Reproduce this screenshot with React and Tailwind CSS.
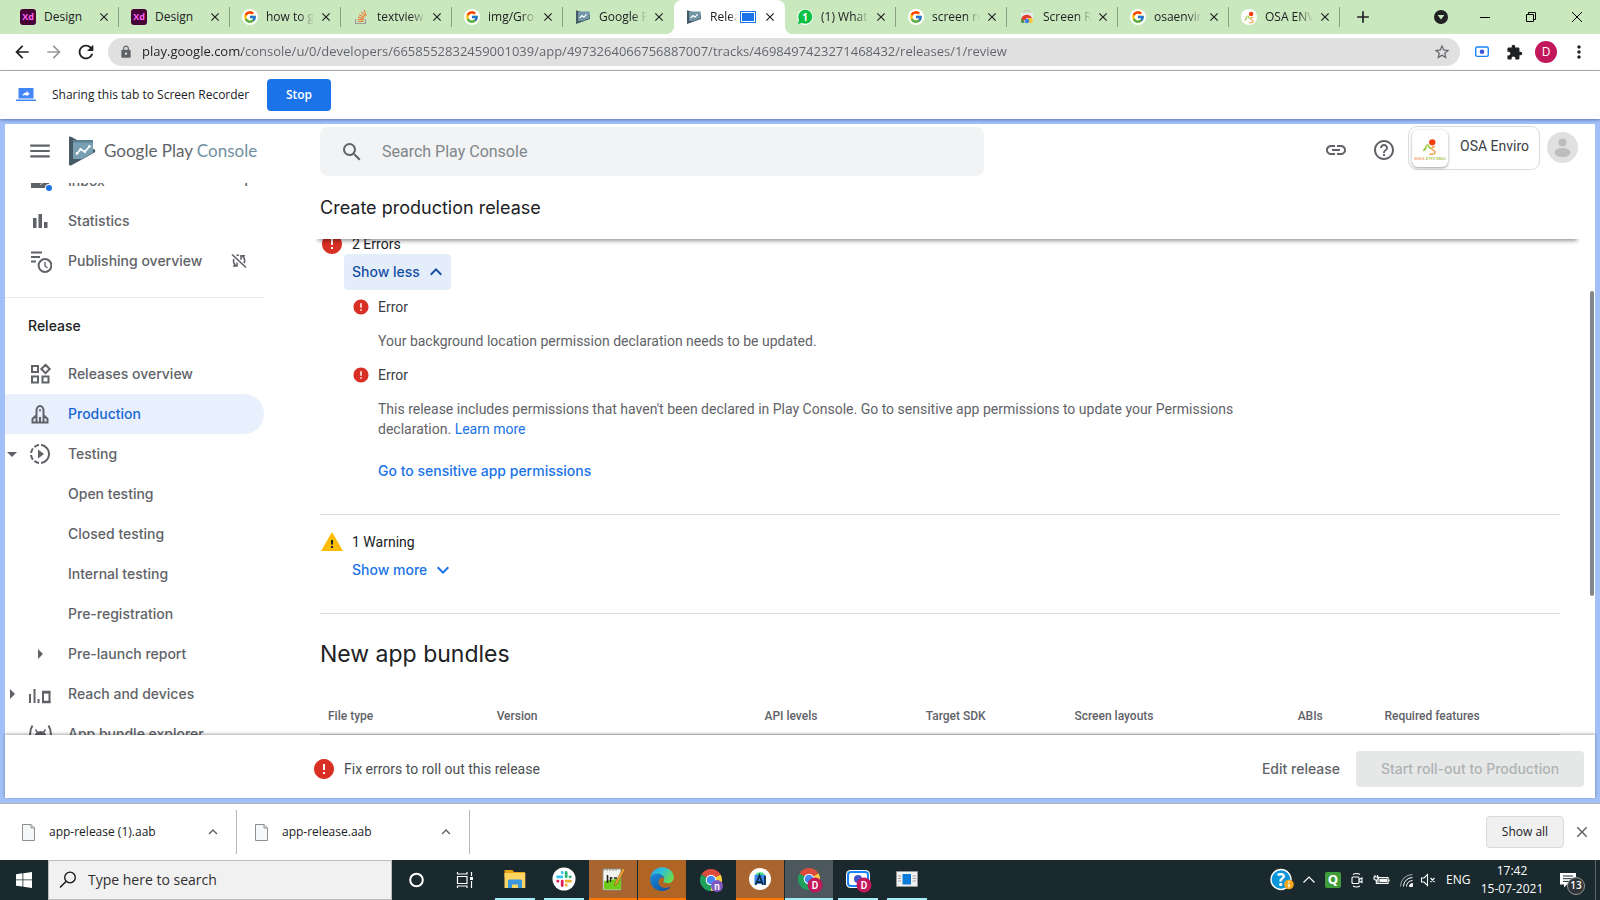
import React from "react";
import { FcGoogle } from "react-icons/fc";
import {
  MdArrowBack, MdArrowForward, MdRefresh, MdLock, MdStarBorder, MdExtension, MdMoreVert, MdClose, MdAdd,
  MdMenu, MdSearch, MdLink, MdHelpOutline, MdError, MdExpandLess, MdExpandMore,
  MdOutlineSlowMotionVideo, MdArrowDropDown, MdArrowRight,
} from "react-icons/md";

/* ---------- favicons ---------- */

const XdIcon = () => (
  <svg viewBox="0 0 16 16" className="size-4">
    <rect width="16" height="16" rx="3" fill="#470137" />
    <text x="8" y="11.4" textAnchor="middle" fontSize="9" fontWeight="700" fontFamily="Open Sans, sans-serif" fill="#ff61f6">Xd</text>
  </svg>
);

const GoogleIcon = () => (
  <span className="flex size-4 items-center justify-center rounded-full bg-white">
    <FcGoogle className="size-[14px]" />
  </span>
);

const StackIcon = () => (
  <svg viewBox="0 0 16 16" className="size-4" fill="none">
    <path d="M2.5 10v4.5h10V10" stroke="#9aa0a0" strokeWidth="1.2" />
    <path d="M4.5 12.5h6M4.6 10.3l6 .6M5 8l5.8 1.6M6.2 5.4l5.2 3M8.4 2.8l4 4.6M11.2 1l2 5.6" stroke="#e8803a" strokeWidth="1.2" />
  </svg>
);

const PlayConsoleMark = ({ className }) => (
  <svg viewBox="0 0 28 30" className={className}>
    <path d="M1 1.6Q1-.3 3 .8L26.5 13.6Q28 14.8 26.5 16.4L3 29.4Q1 30 1 28.4Z" fill="#455a64" />
    <path d="M5 4h20v12.800L13.500 23H5z" fill="#78a0b2" />
    <path d="M5 4h20v2.6H5z" fill="#5b8394" />
    <path d="m9 17.4 3.6-4.2 4.2 2.6 4.6-5.4" fill="none" stroke="#fff" strokeWidth="1.6" />
    <g fill="#fff"><circle cx="9" cy="17.4" r="1.3" /><circle cx="12.6" cy="13.2" r="1.3" /><circle cx="16.8" cy="15.8" r="1.3" /><circle cx="21.4" cy="10.4" r="1.3" /></g>
  </svg>
);

const SmallConsole = () => (
  <svg viewBox="0 0 16 16" className="size-4">
    <path d="M1 1.2 15 5.4V10L1 15Z" fill="#455a64" />
    <path d="M3 2.6h11.6v6.6L7 12H3z" fill="#6f95a6" />
    <path d="m4.6 9 2.4-2.4L9 8.2l2.6-3" fill="none" stroke="#fff" strokeWidth="1.1" />
  </svg>
);

const WhatsIcon = () => (
  <svg viewBox="0 0 16 16" className="size-4">
    <circle cx="8" cy="8" r="8" fill="#fff" />
    <path d="M1 15 2 11a7 7 0 1 1 3 3Z" fill="#0cc143" />
    <text x="8.2" y="11.6" textAnchor="middle" fontSize="10" fontWeight="700" fontFamily="Open Sans, sans-serif" fill="#fff">1</text>
  </svg>
);

const StoreIcon = () => (
  <svg viewBox="0 0 16 16" className="size-4">
    <path d="M5 4V2.6A1 1 0 0 1 6 1.6h4a1 1 0 0 1 1 1V4" fill="none" stroke="#bbb" strokeWidth="1" />
    <path d="M2 4h12v9a1 1 0 0 1-1 1H3a1 1 0 0 1-1-1Z" fill="#e9e9e9" />
    <path d="M2.6 14A5.6 5.6 0 0 1 13 9L8 9Z" fill="#e33b2e" />
    <path d="M2.4 13.6A5.6 5.6 0 0 1 2.8 9.6L6 14H3Z" fill="#3ba55b" />
    <path d="M13 9a5.6 5.6 0 0 1 .8 4L13 14h-3L9 9Z" fill="#f9c835" />
    <circle cx="8" cy="12" r="2.3" fill="#3f7fe8" />
  </svg>
);

const OsaMark = ({ className }) => (
  <svg viewBox="0 0 16 16" className={className}>
    <circle cx="10" cy="3.8" r="2.8" fill="#f43e0a" />
    <path d="M1.8 12C1.6 9.8 3 9.6 3.6 8.2 4 7 4.2 6 5 5.6c.2 1.6.2 3-.2 4-.6 1.4-1.600 2-3 2.4Z" fill="#9ccb3b" />
    <path d="M6 5.6c.6 2.4 1.6 3.4 3.4 3.8" fill="none" stroke="#9ccb3b" strokeWidth="1.4" />
    <path d="M12.6 7.6c-2 .2-3.2 1-3 2 .2 1.2 3.2 1.4 3 3.2-.2 1.6-3.2 2-5.2 1.4" fill="none" stroke="#f6a24a" strokeWidth="1.3" />
  </svg>
);

const OsaIcon = () => (
  <span className="flex size-4 items-center justify-center rounded-full bg-white"><OsaMark className="size-[13px]" /></span>
);

const TABS = [
  { icon: XdIcon, text: "Design" },
  { icon: XdIcon, text: "Design" },
  { icon: GoogleIcon, text: "how to g" },
  { icon: StackIcon, text: "textview" },
  { icon: GoogleIcon, text: "img/Grou" },
  { icon: SmallConsole, text: "Google P", noLine: true },
  { icon: SmallConsole, text: "Relea", active: true },
  { icon: WhatsIcon, text: "(1) Whats" },
  { icon: GoogleIcon, text: "screen re" },
  { icon: StoreIcon, text: "Screen R" },
  { icon: GoogleIcon, text: "osaenviro" },
  { icon: OsaIcon, text: "OSA ENV" },
];

function Tab({ icon: Icon, text, active, noLine }) {
  const fade = text === "Design" ? "" : "[mask-image:linear-gradient(90deg,#000_70%,transparent)]";
  return (
    <div className={`relative flex h-full w-[111px] items-center pl-3 ${active ? "rounded-t-lg bg-white" : ""}`}>
      {active && (
        <>
          <span className="absolute bottom-0 -left-2 size-2 bg-[radial-gradient(circle_at_0_0,transparent_8px,#fff_8px)]" />
          <span className="absolute -right-2 bottom-0 size-2 bg-[radial-gradient(circle_at_100%_0,transparent_8px,#fff_8px)]" />
        </>
      )}
      <button className="flex items-center gap-2">
        <Icon />
        <span className={`block overflow-hidden text-left whitespace-nowrap ${active ? "w-7" : "w-12"} ${fade}`}>{text}</span>
        {active && <span className="-ml-[6px] block h-3 w-4 border border-[#1a73e8] bg-[#1a73e8] shadow-[inset_0_0_0_1px_#fff]" />}
      </button>
      <button aria-label="Close tab" className="absolute right-[7px] flex size-4 items-center justify-center text-[#202124]">
        <MdClose className="size-[14px]" />
      </button>
      {!active && !noLine && <span className="absolute right-0 h-5 w-px bg-[#8a9c83]" />}
    </div>
  );
}

function TabStrip() {
  return (
    <div className="flex h-[34px] items-center bg-[#cae8be] pl-2 text-xs text-[#202124]">
      {TABS.map((t, i) => <Tab key={i} {...t} />)}
      <button aria-label="New tab" className="ml-[13px] flex size-5 items-center justify-center"><MdAdd className="size-5" /></button>
      <div className="ml-auto flex h-full items-center text-black">
        <button aria-label="Search tabs" className="mr-[13px] flex size-4 items-center justify-center">
          <svg viewBox="0 0 16 16" className="size-4"><circle cx="8" cy="8" r="7" fill="#202124" /><path d="M4.6 6h6.8L8 10.6Z" fill="#cae8be" /></svg>
        </button>
        <button aria-label="Minimise" className="flex h-7 w-[46px] items-center justify-center"><svg viewBox="0 0 10 10" className="size-[10px]"><path d="M0 5.5h10" stroke="#000" /></svg></button>
        <button aria-label="Restore" className="flex h-7 w-[46px] items-center justify-center"><svg viewBox="0 0 10 10" className="size-[10px]" fill="none" stroke="#000"><path d="M.5 2.5h7v7h-7zM2.5 2.5v-2h7v7h-2" /></svg></button>
        <button aria-label="Close window" className="flex h-7 w-[46px] items-center justify-center"><svg viewBox="0 0 10 10" className="size-[10px]"><path d="M0 0 10 10M10 0 0 10" stroke="#000" /></svg></button>
      </div>
    </div>
  );
}

function Toolbar() {
  return (
    <div className="flex h-[37px] items-center border-b border-[#b6b4b6] bg-white pr-[11px] pl-3 text-[#202124]">
      <button aria-label="Back" className="flex w-5 justify-center"><MdArrowBack className="size-5" /></button>
      <button aria-label="Forward" className="ml-3 flex w-5 justify-center text-[#9a9a9a]"><MdArrowForward className="size-5" /></button>
      <button aria-label="Reload" className="ml-3 flex w-5 justify-center"><MdRefresh className="size-[22px] shrink-0" /></button>
      <div className="ml-3 flex h-7 flex-1 items-center rounded-full bg-[#e0e0e0] pr-[9px] pl-[11px]">
        <MdLock className="size-[14px] text-[#5f6368]" />
        <input
          aria-label="Address"
          readOnly
          value="play.google.com/console/u/0/developers/6658552832459001039/app/4973264066756887007/tracks/4698497423271468432/releases/1/review"
          className="ml-[9px] flex-1 bg-[linear-gradient(90deg,#202124_100px,#5f6368_100px)] bg-clip-text text-[13px] text-transparent outline-none"
        />
        <button aria-label="Bookmark"><MdStarBorder className="size-[18px] text-[#5f6368]" /></button>
      </div>
      <button aria-label="Screen recorder" className="ml-[14px]">
        <svg viewBox="0 0 16 16" className="size-4"><rect x="1.7" y="3" width="12.6" height="9.4" rx="1.6" fill="#fff" stroke="#1a82f7" strokeWidth="1.4" /><circle cx="8" cy="7.8" r="2.3" fill="#3f51d8" /></svg>
      </button>
      <button aria-label="Extensions" className="ml-4"><MdExtension className="size-[17px]" /></button>
      <button aria-label="Profile D" className="ml-3 flex size-[22px] items-center justify-center rounded-full bg-[#c2185b] text-xs text-white">D</button>
      <button aria-label="Menu" className="ml-3"><MdMoreVert className="size-5" /></button>
    </div>
  );
}

function InfoBar() {
  return (
    <div className="relative z-10 flex h-12 items-center bg-white pl-4 text-xs text-[#202124] shadow-[0_1px_3px_rgba(40,70,140,0.6)]">
      <svg viewBox="0 0 20 16" className="h-4 w-5">
        <path d="M2.5 1h15v10.500h-15z" fill="#4285f4" /><path d="M0 12.5h20V14H0z" fill="#4285f4" />
        <path d="M6.5 9c.4-2 1.6-3.2 4-3.4V4l3.2 2.8-3.2 2.7V8c-1.7 0-2.9.2-4 1Z" fill="#fff" />
      </svg>
      <span className="ml-4 w-[203px]">Sharing this tab to Screen Recorder</span>
      <button className="ml-3 h-8 w-16 rounded-[4px] bg-[#1a73e8] font-semibold text-white">Stop</button>
    </div>
  );
}

/* ---------- console ---------- */

const ic = "size-6 shrink-0";
const StatIcon = () => <svg viewBox="0 0 24 24" className={ic} fill="#5f6368"><path d="M5 9h3.500v10H5zM10.500 5H14v14h-3.500zM16 13h3.500v6H16z" /></svg>;
const PubIcon = () => (
  <svg viewBox="0 0 24 24" className={ic} fill="none" stroke="#5f6368" strokeWidth="2">
    <path d="M3 3.500h11M3 8h9M3 12.500h5" /><circle cx="17" cy="16.500" r="6.400" /><path d="M17 13v4l2.500 1.800" strokeWidth="1.4" />
  </svg>
);
const RelIcon = () => (
  <svg viewBox="0 0 24 24" className={ic} fill="none" stroke="#5f6368" strokeWidth="2">
    <path d="M4 4h6v6H4zM4 14.500h6v6H4zM14.500 14.500h6v6h-6zM17.500 2.800 21.700 7 17.500 11.200 13.300 7Z" />
  </svg>
);
const ProdIcon = () => (
  <svg viewBox="0 0 24 24" className={ic} fill="none" stroke="#5f6368" strokeWidth="2">
    <path d="M8.500 20V8.500C8.500 6 10 4 12 4s3.500 2 3.500 4.500V20M8.500 13l-4 4v3.500h15V17l-4-4M12 15v5" /><path d="M12 7v2.500" strokeWidth="1.6" />
  </svg>
);
const ReachIcon = () => (
  <svg viewBox="0 0 24 24" className={ic} fill="none" stroke="#5f6368" strokeWidth="2">
    <path d="M2 12v9M6.500 7v14M10.500 17v4M15 10.500h6.500V20H15z" /><path d="M14 20h8.500M14 10h8.500" strokeWidth="2.600" />
  </svg>
);
const BundleIcon = () => (
  <svg viewBox="0 0 24 24" className={ic} fill="none" stroke="#5f6368" strokeWidth="2">
    <path d="M4.500 3.500C1.300 8.500 1.300 15.500 4.500 20.500M20.500 3.500c3.200 5 3.200 12 0 17" /><path d="M6.500 15a6 6 0 0 1 12 0Z" fill="#5f6368" stroke="none" /><path d="m7.500 7.500 2 3M17.500 7.500l-2 3" strokeWidth="1.4" />
  </svg>
);
const InboxIcon = () => (
  <svg viewBox="0 0 24 24" className={ic}>
    <path d="M3 4h18v11.500l-4 1.500-3-3-4 3-5-3z" fill="#5f6368" /><path d="M3 14h5.500l3.500 2 3.500-2H21v5H3z" fill="#5f6368" />
    <circle cx="21" cy="19" r="4" fill="#fff" /><circle cx="21" cy="19" r="3" fill="#1a73e8" />
  </svg>
);
const SyncOff = () => (
  <svg viewBox="0 0 16 16" className="size-4" fill="none" stroke="#5f6368" strokeWidth="1.6">
    <path d="M1 1.5 15 14.5M5.500 2.500 8 2M2.800 6c-.8 3 0 5 1.8 6.6M2 13h4V9.500M14 2.800h-4v4M11.500 3.200c2 1.8 2.600 4.600 1.6 7" />
  </svg>
);
const WarningIcon = ({ className }) => (
  <svg viewBox="0 0 24 24" className={className}>
    <path d="M1 21h22L12 2 1 21z" fill="#fbbc04" /><path d="M11 10h2v4.500h-2zM11 16h2v2h-2z" fill="#202124" />
  </svg>
);

function NavItem({ icon: Icon, label, active, arrow, innerArrow, end }) {
  return (
    <a href="#" className={`flex h-10 shrink-0 items-center ${active ? "rounded-r-full bg-[#e8f0fe] text-[#1967d2]" : ""}`}>
      <span className="flex w-[23px] shrink-0 items-center">
        {arrow === "down" && <MdArrowDropDown className="-ml-[5px] size-6 shrink-0" />}
        {arrow === "right" && <MdArrowRight className="-ml-[5px] size-6 shrink-0" />}
      </span>
      <span className="flex w-10 shrink-0">
        {Icon && <Icon />}
        {innerArrow && <MdArrowRight className="size-6" />}
      </span>
      <span className="flex-1">{label}</span>
      {end}
    </a>
  );
}

const SlowIcon = () => <MdOutlineSlowMotionVideo className={ic} />;

function SideNav() {
  return (
    <nav className="w-[259px] shrink-0 overflow-hidden text-sm font-medium text-[#5f6368]">
      <div className="-mt-[22px] flex flex-col">
        <NavItem icon={InboxIcon} label="Inbox" end={<span className="mr-4">1</span>} />
        <NavItem icon={StatIcon} label="Statistics" />
        <NavItem icon={PubIcon} label="Publishing overview" end={<span className="mr-[17px]"><SyncOff /></span>} />
        <div className="mt-4 border-t border-[#e8eaed]" />
        <h2 className="my-[18px] pl-[23px] leading-5 text-[#202124]">Release</h2>
        <NavItem icon={RelIcon} label="Releases overview" />
        <NavItem icon={ProdIcon} label="Production" active />
        <NavItem icon={SlowIcon} label="Testing" arrow="down" />
        <NavItem label="Open testing" />
        <NavItem label="Closed testing" />
        <NavItem label="Internal testing" />
        <NavItem label="Pre-registration" />
        <NavItem label="Pre-launch report" innerArrow />
        <NavItem icon={ReachIcon} label="Reach and devices" arrow="right" />
        <NavItem icon={BundleIcon} label="App bundle explorer" />
      </div>
    </nav>
  );
}

function ConsoleHeader() {
  return (
    <header className="flex h-[59px] items-start text-[#5f6368]">
      <div className="flex w-[315px] shrink-0 items-center pt-3">
        <button aria-label="Main menu" className="ml-[22px]"><MdMenu className="size-[26px]" /></button>
        <PlayConsoleMark className="ml-[15px] h-[30px] w-7" />
        <a href="#" className="ml-2 font-[Lato] text-[17px] text-[#5f6368]">Google Play <span className="text-[#6f8f9f]">Console</span></a>
      </div>
      <label className="mt-[3px] flex h-[49px] max-w-[664px] flex-1 items-center rounded-lg bg-[#f1f3f4] pl-5">
        <MdSearch className="size-6" />
        <input aria-label="Search Play Console" placeholder="Search Play Console" className="ml-[18px] flex-1 font-[Roboto] text-base outline-none placeholder:text-[#80868b]" />
      </label>
      <div className="ml-auto flex items-start pr-[17px]">
        <button aria-label="Copy link" className="mt-[14px]"><MdLink className="size-6" /></button>
        <button aria-label="Help" className="mt-[14px] ml-6"><MdHelpOutline className="size-6" /></button>
        <button className="mt-[2px] ml-3 flex h-11 w-[132px] rounded-[9px] border border-[#dadce0] font-[Roboto] text-sm text-[#3c4043]">
          <span className="mt-[3px] ml-[3px] flex h-[37px] w-9 flex-col items-center rounded-md bg-white pt-2 shadow-[0_1px_3px_rgba(60,64,67,0.5)]">
            <OsaMark className="size-[18px]" />
            <span className="font-['Liberation_Serif'] text-[5px] leading-[6px] font-bold text-[#a9c34c]"><span className="text-[#f08a4a]">OSA</span> ENVIRO</span>
          </span>
          <span className="mt-[9px] ml-3 leading-5">OSA Enviro</span>
        </button>
        <button aria-label="Account" className="mt-2 ml-[7px]">
          <svg viewBox="0 0 31 31" className="size-[31px]"><circle cx="15.5" cy="15.5" r="15.5" fill="#e0e0e0" /><circle cx="15.5" cy="10.5" r="4" fill="#bdbdbd" /><ellipse cx="15.5" cy="20.5" rx="8" ry="4.5" fill="#bdbdbd" /></svg>
        </button>
      </div>
    </header>
  );
}

function ErrorItem({ children }) {
  return (
    <li>
      <div className="mb-[14px] flex h-5 items-center text-[#3c4043]">
        <MdError className="mr-2 size-[18px] text-[#d93025]" />
        Error
      </div>
      <div className="mb-[14px] max-w-[916px] pl-[26px] text-[#5f6368]">{children}</div>
    </li>
  );
}

function ReleaseReview() {
  return (
    <main className="relative ml-[50px] flex min-w-0 flex-1 flex-col overflow-hidden">
      <div className="z-10 mr-[14px] h-14 shrink-0 bg-white pl-[6px] shadow-[0_6px_4px_-4px_rgba(0,0,0,0.4)]">
        <h1 className="pt-3 text-lg leading-[26px] text-[#202124]">Create production release</h1>
      </div>
      <div className="mr-[35px] ml-[6px] min-h-0 flex-1 font-[Roboto] text-sm leading-5">
        <section className="-mt-[5px] border-b border-[#dadce0] pb-[33px]">
          <div className="flex h-5 items-center text-[#202124]"><MdError className="mr-2 size-6 text-[#d93025]" />2 Errors</div>
          <button className="ml-6 flex h-9 w-[107px] items-center rounded-[4px] bg-[#e3eefa] pl-2 font-[Inter] font-medium text-[#174ea6]">
            Show less<MdExpandLess className="ml-1 size-6" />
          </button>
          <ul className="mt-[7px] ml-8">
            <ErrorItem>Your background location permission declaration needs to be updated.</ErrorItem>
            <ErrorItem>
              This release includes permissions that haven't been declared in Play Console. Go to sensitive app permissions to update your Permissions declaration. <a href="#" className="text-[#1a73e8]">Learn more</a>
            </ErrorItem>
          </ul>
          <a href="#" className="mt-[22px] ml-[58px] block font-[Inter] font-medium text-[#1a73e8]">Go to sensitive app permissions</a>
        </section>
        <section className="border-b border-[#dadce0] pt-[17px] pb-[25px]">
          <div className="flex h-5 items-center text-[#202124]"><WarningIcon className="mr-2 size-6" />1 Warning</div>
          <button className="ml-6 flex h-9 w-[115px] items-center pl-2 font-[Inter] font-medium text-[#1a73e8]">
            Show more<MdExpandMore className="ml-1 size-6" />
          </button>
        </section>
        <h2 className="mt-6 font-[Inter] text-[23px] leading-8 text-[#202124]">New app bundles</h2>
        <table className="mt-7 w-full table-fixed text-xs text-[#5f6368]">
          <thead>
            <tr className="h-9 border-b border-[#dadce0] text-left [&>th]:pl-2 [&>th]:font-medium">
              <th className="w-[13.6%]">File type</th>
              <th className="w-[21.6%]">Version</th>
              <th className="w-[13%]">API levels</th>
              <th className="w-[12%]">Target SDK</th>
              <th className="w-[18%]">Screen layouts</th>
              <th className="w-[7%]">ABIs</th>
              <th>Required features</th>
            </tr>
          </thead>
        </table>
      </div>
      <span className="absolute top-[108px] right-px h-[305px] w-1 rounded-full bg-[#80868b]" />
    </main>
  );
}

function Console() {
  return (
    <div className="flex min-h-0 flex-1 flex-col border-[5px] border-[#a1c0f8] bg-white font-[Inter]">
      <ConsoleHeader />
      <div className="flex min-h-0 flex-1">
        <SideNav />
        <ReleaseReview />
      </div>
      <footer className="z-10 flex h-[63px] shrink-0 items-center bg-white pt-1 pr-[11px] pl-[307px] font-[Roboto] text-sm text-[#5f6368] shadow-[0_-1px_3px_rgba(0,0,0,0.35)]">
        <MdError className="mr-2 size-6 text-[#d93025]" />
        <span className="text-[#4a4e52]">Fix errors to roll out this release</span>
        <button className="mr-4 ml-auto font-[Inter] font-medium">Edit release</button>
        <button disabled className="h-9 w-[228px] rounded-[4px] bg-[#e6e8e8] font-[Inter] font-medium text-[#afb2b3]">Start roll-out to Production</button>
      </footer>
    </div>
  );
}

/* ---------- downloads and taskbar ---------- */

function Download({ name }) {
  return (
    <div className="flex h-11 w-[233px] items-center border-r border-[#b9b9b9] pr-[14px] pl-[18px]">
      <svg viewBox="0 0 13 17" className="h-[17px] w-[13px]"><path d="M.5.5h8.500l3.500 3.500v12.500H.5Z" fill="#f5f8f9" stroke="#8f8f8f" /><path d="M9 .5v3.500h3.500" fill="none" stroke="#8f8f8f" /></svg>
      <span className="ml-[14px] flex-1">{name}</span>
      <button aria-label={`Options for ${name}`}><MdExpandLess className="size-[18px] text-[#5f6368]" /></button>
    </div>
  );
}

function Shelf() {
  return (
    <div className="flex h-[57px] shrink-0 items-center border-t border-[#b4b4b4] bg-white pl-1 text-xs text-[#202124]">
      <Download name="app-release (1).aab" />
      <Download name="app-release.aab" />
      <button className="ml-auto h-8 w-[78px] rounded-[4px] border border-[#d9d9d9] bg-[#f0f0f0]">Show all</button>
      <button aria-label="Close downloads" className="mx-[9px]"><MdClose className="size-[18px] text-[#5f6368]" /></button>
    </div>
  );
}

const ChromeLogo = ({ badge, color }) => (
  <svg viewBox="0 0 24 24" className="size-6 overflow-visible">
    <path d="M12 12 2.47 6.5A11 11 0 0 1 21.53 6.5Z" fill="#dd4b3e" />
    <path d="M12 12V23A11 11 0 0 1 2.47 6.5Z" fill="#1fa15d" />
    <path d="M12 12 21.53 6.5A11 11 0 0 1 12 23Z" fill="#ffcd42" />
    <circle cx="12" cy="12" r="5.3" fill="#fff" /><circle cx="12" cy="12" r="4.3" fill="#4587f4" />
    <circle cx="18" cy="18" r={badge === "D" ? 7.5 : 6} fill={color} />
    <text x="18" y="21.5" textAnchor="middle" fontSize="10" fontWeight="600" fontFamily="Roboto, sans-serif" fill="#fff">{badge}</text>
  </svg>
);

const SlackLogo = () => (
  <svg viewBox="0 0 24 24" className="size-6" fill="none" strokeWidth="2.8" strokeLinecap="round">
    <circle cx="12" cy="12" r="11.5" fill="#fff" />
    <path d="M10.200 5.500v.3M5.500 9.800h4.500" stroke="#36c5f0" /><path d="M14.200 5.500v4.300M18.300 9.800h-.3" stroke="#2eb67d" />
    <path d="M14.200 14.200h4.300M14.200 18.300v-.3" stroke="#ecb22e" /><path d="M10.200 14.200v4.300M5.700 14.200h.3" stroke="#e01e5a" />
  </svg>
);

const EditorLogo = () => (
  <svg viewBox="0 0 24 24" className="size-6">
    <path d="M2 2h18v21H2z" fill="#f4f4ee" stroke="#8d8d80" strokeWidth=".8" /><path d="M3 14l17-3v11.500H3z" fill="#6ecb1c" /><path d="M3 1v3M6 1v3M9 1v3M12 1v3M15 1v3" stroke="#777" strokeWidth=".8" />
    <path d="M6.500 8v8" stroke="#222" strokeWidth="1.600" /><path d="M9.500 10v5M9 11h2.500M13 11h3" stroke="#222" strokeWidth="1.400" /><path d="m22 1-8 15-.5 3 2.500-2L24 2.500Z" fill="#f2a53a" stroke="#8b5a1a" strokeWidth=".6" />
  </svg>
);

const EdgeLogo = () => (
  <svg viewBox="0 0 24 24" className="size-6">
    <defs>
      <linearGradient id="edgeTop" x1="0" x2="1" y1="0" y2=".5"><stop offset="0" stopColor="#2aa5e0" /><stop offset=".5" stopColor="#2fc0d6" /><stop offset="1" stopColor="#66dd55" /></linearGradient>
      <linearGradient id="edgeLow" x1="0" x2="1" y1="0" y2="1"><stop offset="0" stopColor="#1b8ad8" /><stop offset="1" stopColor="#0c4f9e" /></linearGradient>
    </defs>
    <path d="M.4 10.500C1 4.500 6 .2 12 .2c7 0 11.8 4.800 11.800 10 0 4-3 6-6 6-3.200 0-4.800-1.200-4.300-2 1-1.200 1.200-2.400.2-4.200C11.500 6.500 4 6 .4 10.500Z" fill="url(#edgeTop)" />
    <path d="M.2 12.500C0 8 4.500 6.800 7.500 6.800c3.500 0 6 2 6.500 4.200-2.500-1.500-5.500.5-5.500 4 0 4.500 5 8 12.500 4.500-2 3-5.500 4.400-9 4.400C5.500 23.900.3 19 .2 12.500Z" fill="url(#edgeLow)" />
  </svg>
);

const StudioLogo = () => (
  <svg viewBox="0 0 24 24" className="size-6">
    <circle cx="12" cy="12" r="11" fill="#fff" /><path d="M7 8a5.500 4.500 0 0 1 10 0Z" fill="#3ddc84" /><path d="M6.500 8h11v9h-11z" fill="#4285f4" />
    <path d="m7.500 18 4-9.500L15 18M9 15h5M17 9v9" fill="none" stroke="#083042" strokeWidth="1.8" />
  </svg>
);

const RecorderLogo = () => (
  <svg viewBox="0 0 24 24" className="size-6 overflow-visible">
    <rect x="0" y="3" width="24" height="18" rx="4.500" fill="#fff" /><rect x="2" y="5" width="20" height="14" rx="3" fill="#fff" stroke="#1a82f7" strokeWidth="2" /><circle cx="12" cy="12" r="4" fill="#4652c8" />
    <circle cx="18" cy="18" r="7.5" fill="#c2185b" /><text x="18" y="21.5" textAnchor="middle" fontSize="10" fontWeight="600" fontFamily="Roboto, sans-serif" fill="#fff">D</text>
  </svg>
);

const WindowLogo = () => (
  <svg viewBox="0 0 24 24" className="size-6">
    <path d="M1.500 4.500h21v15h-21z" fill="#f1f1f1" stroke="#999" strokeWidth=".7" /><path d="M7.500 7h8.500v10.500H7.500z" fill="#0a7bd8" /><path d="M3 9h3M3 11.500h3M3 14h3M17.500 9h3.500M17.500 11.500h3.500M17.500 14h3.500" stroke="#999" strokeWidth=".9" />
  </svg>
);

const FolderLogo = () => (
  <svg viewBox="0 0 24 24" className="size-6">
    <path d="M1.500 3h8l1.500 2h11v5h-20.500z" fill="#e8a317" /><path d="M1.500 6h20.800v15H1.500z" fill="#fcd462" /><path d="M5 21v-7q0-1.500 1.500-1.500h11Q19 12.500 19 14v7h-4v-3.500H9V21Z" fill="#3a96dd" />
  </svg>
);

const Cortana = () => <svg viewBox="0 0 24 24" className="size-6"><circle cx="11.500" cy="12" r="6.300" fill="none" stroke="#fff" strokeWidth="2" /></svg>;
const TaskView = () => (
  <svg viewBox="0 0 24 24" className="size-6" fill="none" stroke="#fff" strokeWidth="1.2"><path d="M3.500 8.500H13v7H3.500zM3.500 4v2H13V4M3.500 20v-2H13v2M17.500 4v4M17.500 13v7" /><path d="M16 9h3v3h-3z" fill="#fff" stroke="none" /></svg>
);

const APPS = [
  { label: "Cortana", icon: <Cortana /> },
  { label: "Task view", icon: <TaskView /> },
  { label: "File Explorer", icon: <FolderLogo />, line: true },
  { label: "Slack", icon: <SlackLogo />, line: true },
  { label: "Notepad++", icon: <EditorLogo />, tile: "border-b-2 border-[#ff7600] bg-[#a8652f]" },
  { label: "Edge", icon: <EdgeLogo />, tile: "border-b-2 border-[#ff7600] bg-[#b06524]" },
  { label: "Chrome", icon: <ChromeLogo badge="n" color="#7e57c2" /> },
  { label: "Android Studio", icon: <StudioLogo />, tile: "border-b-2 border-[#ff7600] bg-[#a8652f]" },
  { label: "Chrome D", icon: <ChromeLogo badge="D" color="#c2185b" />, tile: "border-b-2 border-[#a6ecfa] bg-[#4c585d]" },
  { label: "Screen Recorder", icon: <RecorderLogo />, line: true },
  { label: "Window", icon: <WindowLogo />, line: true },
];

function Taskbar() {
  return (
    <div className="flex h-10 shrink-0 items-stretch bg-[#1a292d] text-xs text-white">
      <button aria-label="Start" className="flex w-12 items-center justify-center">
        <svg viewBox="0 0 16 16" className="size-4" fill="#fff"><path d="M0 2.200 6.500 1.300v6.200H0zM7.300 1.200 16 0v7.500H7.300zM0 8.300h6.500v6.300L0 13.700zM7.300 8.300H16V16l-8.700-1.200z" /></svg>
      </button>
      <label className="flex w-[344px] items-center border border-[#bdbdbd] bg-[#f1f1f1] pl-[10px]">
        <svg viewBox="0 0 18 18" className="size-[18px]" fill="none" stroke="#111" strokeWidth="1.3"><circle cx="11" cy="6.500" r="5.300" /><path d="M7.200 10.300 1 16.500" /></svg>
        <input aria-label="Type here to search" placeholder="Type here to search" className="ml-[11px] flex-1 text-sm outline-none placeholder:text-[#2f2f2f]" />
      </label>
      <div className="ml-px flex gap-px">
        {APPS.map((a) => (
          <button key={a.label} aria-label={a.label} className={`flex w-12 flex-col items-center ${a.tile || ""}`}>
            <span className="flex min-h-0 flex-1 items-center">{a.icon}</span>
            {a.line && <span className="h-0.5 w-10 bg-[#a6ecfa]" />}
          </button>
        ))}
      </div>
      <div className="ml-auto flex items-center">
        <svg viewBox="0 0 24 24" className="size-6"><circle cx="11" cy="11.500" r="10" fill="#0c95da" stroke="#fff" strokeWidth="1.4" /><text x="11" y="17.5" textAnchor="middle" fontSize="17" fontWeight="700" fontFamily="Open Sans, sans-serif" fill="#fff">?</text><circle cx="19" cy="16.500" r="4.800" fill="#f5a81c" /><path d="M19 15.700v3.500M19 13.300v1.300" stroke="#fff" strokeWidth="1.4" /></svg>
        <button aria-label="Hidden icons" className="ml-2"><svg viewBox="0 0 14 14" className="size-[14px]" fill="none" stroke="#fff" strokeWidth="1.2"><path d="m1.500 9.500 5.500-5.500 5.500 5.500" /></svg></button>
        <span className="ml-[9px] flex size-4 items-center justify-center rounded-[2px] bg-[#3f9c3b] text-[13px] font-bold">Q</span>
        <svg viewBox="0 0 16 16" className="ml-2 size-4" fill="none" stroke="#fff" strokeWidth="1.1"><rect x="3" y="5" width="7" height="6.500" rx="1" /><path d="m10 7.500 3-1.500v4.500L10 9M4 2.500q3.500-2 7 0M4 14q3.500 2 7 0" /></svg>
        <svg viewBox="0 0 17 16" className="ml-2 h-4 w-[17px]" fill="none" stroke="#fff" strokeWidth="1.1"><path d="M5 5.500h10v6H5zM16 7.500v2M2 3v2M4.500 3v2M1 5h4.500v2L3.300 8.500 1 7ZM3.300 8.500v3H5" /><path d="M7 7.200h6.500v2.600H7z" fill="#fff" /></svg>
        <svg viewBox="0 0 16 16" className="ml-2 size-4" fill="none" stroke="#fff"><path d="M2.500 14.500A12 12 0 0 1 14.500 2.500" opacity=".6" /><path d="M5.500 14.500A9 9 0 0 1 14.500 5.500M8.500 14.500a6 6 0 0 1 6-6" /><path d="M11.500 14.500a3 3 0 0 1 3-3v3Z" fill="#fff" /></svg>
        <svg viewBox="0 0 16 16" className="ml-[6px] size-4" fill="none" stroke="#fff" strokeWidth="1.1"><path d="M1.500 6h2.500l3.500-3.500v11L4 10H1.500zM10.500 6l4 4M14.500 6l-4 4" /></svg>
        <span className="ml-[10px] w-6">ENG</span>
        <div className="ml-[10px] flex w-16 flex-col items-center leading-[18px]"><span>17:42</span><span>15-07-2021</span></div>
        <span className="relative ml-4 flex size-6 items-center">
          <svg viewBox="0 0 16 16" className="size-4"><path d="M0 1h16v11.500H7l-3 3v-3H0z" fill="#fff" /><path d="M3 4h10M3 6.700h10M3 9.400h7" stroke="#1a292d" /></svg>
          <span className="absolute top-[9px] left-[7px] flex size-[18px] items-center justify-center rounded-full border border-[#9a9a9a] bg-[#2f3437] text-[10px] font-semibold">13</span>
        </span>
        <span className="mr-1 ml-[11px] h-10 w-px bg-[#5d686b]" />
      </div>
    </div>
  );
}

export default function App() {
  return (
    <div className="flex h-screen flex-col overflow-hidden bg-white font-['Open_Sans',sans-serif]">
      <TabStrip />
      <Toolbar />
      <InfoBar />
      <Console />
      <Shelf />
      <Taskbar />
    </div>
  );
}
